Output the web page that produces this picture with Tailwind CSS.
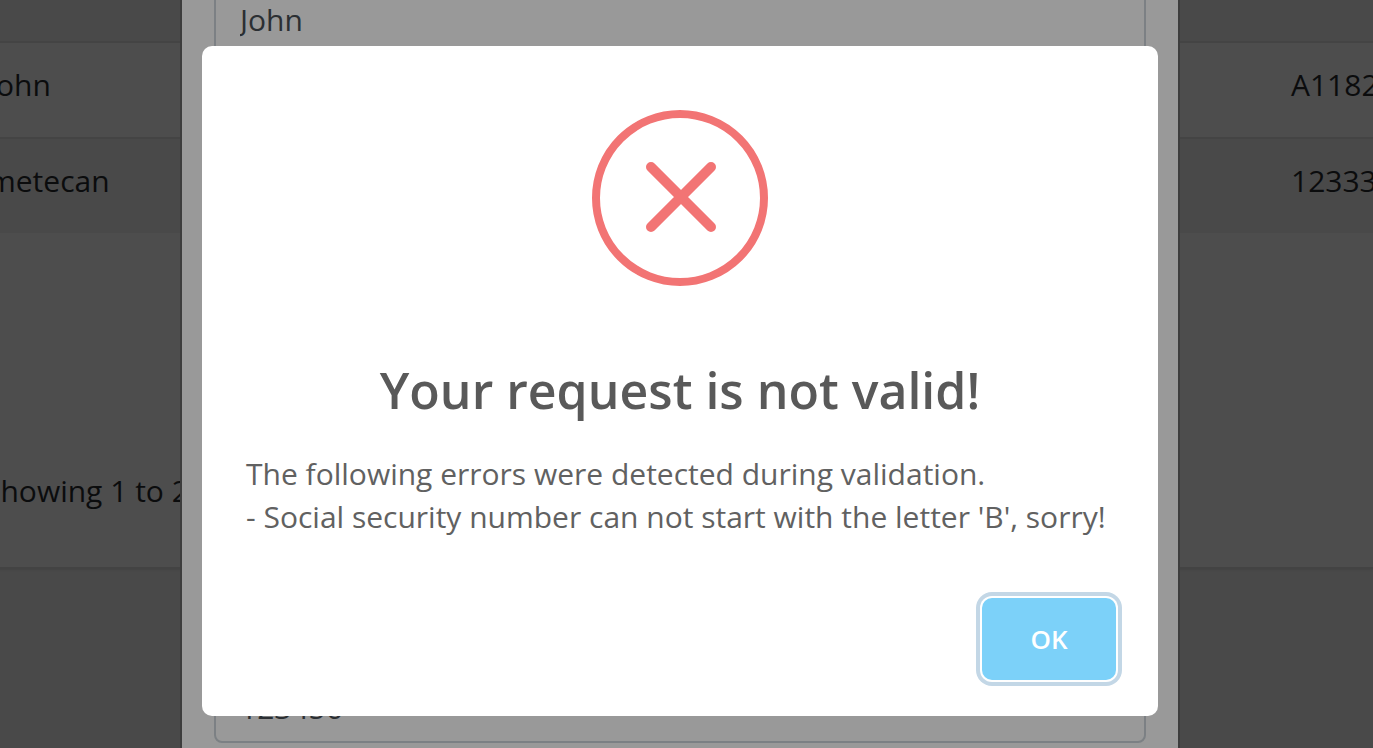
<!DOCTYPE html>
<html lang="en">
<head>
<meta charset="utf-8">
<meta name="viewport" content="width=device-width, initial-scale=1">
<title>Your request is not valid!</title>
<script src="https://cdn.jsdelivr.net/npm/@tailwindcss/browser@4"></script>
</head>
<body class="h-screen overflow-hidden bg-[#494949] font-['Open_Sans','Noto_Sans',sans-serif] text-[30px] text-[#0b0c0d]">

  <!-- Page behind the dialogs, scrolled sideways -->
  <main class="-ml-9 overflow-hidden border-b-2 border-[#434343] bg-[#4d4d4d] shadow-sm shadow-black/5">
    <table class="w-full table-fixed border-collapse text-left leading-[48px]">
      <colgroup><col><col class="w-[148px]"></colgroup>
      <tbody>
        <tr class="h-[42px] bg-[#494949]"><td></td><td></td></tr>
        <tr class="border-t-2 border-[#444444]">
          <td class="px-6 pt-[18px] pb-7">John</td>
          <td class="overflow-hidden pt-[18px] pr-0 pb-7 pl-[66px]">A11823</td>
        </tr>
        <tr class="border-t-2 border-[#444444] bg-[#494949]">
          <td class="px-6 pt-[18px] pb-7">metecan</td>
          <td class="overflow-hidden pt-[18px] pr-0 pb-7 pl-[66px]">123333</td>
        </tr>
      </tbody>
    </table>
    <p class="px-5 pt-[234px] pb-[52px] leading-[48px]">Showing 1 to 2 of 2 entries</p>
  </main>

  <!-- Edit form -->
  <div class="fixed inset-0 flex justify-center overflow-hidden pr-[13px]">
    <form class="-mt-[21px] flex w-full max-w-[1000px] shrink-0 flex-col gap-[612px] self-start border-x-2 border-[#3d3d3d] bg-[#999999] px-8 pb-10">
      <input aria-label="Name" value="John" class="h-[76px] w-full rounded-lg border-2 border-[#7c8084] bg-transparent px-6 pt-1 text-[#2b2f33]">
      <input aria-label="Social security number" value="123456" class="h-[76px] w-full rounded-lg border-2 border-[#7c8084] bg-transparent px-6 pt-1 text-[#2b2f33]">
    </form>
  </div>

  <!-- Validation alert -->
  <div class="fixed inset-0 flex items-center justify-center pt-[14px] pr-[13px]">
    <section role="alertdialog" aria-modal="true" aria-labelledby="alert-title" aria-describedby="alert-text" class="flex w-full max-w-[956px] flex-col rounded-[10px] bg-white">
      <svg class="mx-auto mt-16 size-44" viewBox="0 0 176 176" fill="none" stroke="#f27474" aria-hidden="true">
        <circle cx="88" cy="88" r="84" stroke-width="8"/>
        <path d="M59 57 119 117M119 57 59 117" stroke-width="10" stroke-linecap="round"/>
      </svg>
      <h1 id="alert-title" class="mt-[68px] text-center text-[50px] leading-[72px] font-semibold text-[#595959]">Your request is not valid!</h1>
      <p id="alert-text" class="mt-[26px] px-11 leading-[43px] whitespace-nowrap text-[#616161]">The following errors were detected during validation.<br>- Social security number can not start with the letter 'B', sorry!</p>
      <div class="mt-[60px] flex justify-end pr-[42px] pb-9">
        <button type="button" autofocus class="h-[82px] w-[134px] rounded-[10px] bg-[#7cd1f9] text-[26px] font-semibold text-white shadow-[0_0_0_2px_#fff,0_0_0_6px_#c3d7e6] outline-none">OK</button>
      </div>
    </section>
  </div>
</body>
</html>
